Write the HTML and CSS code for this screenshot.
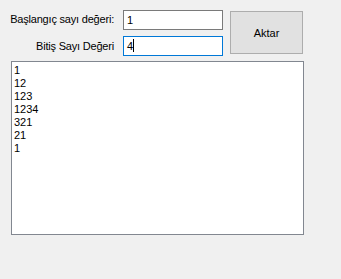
FILE: index.html
```
<!DOCTYPE html>
<html lang="tr">

<head>
    <meta charset="UTF-8">
    <meta name="viewport" content="width=device-width, initial-scale=1.0">
    <title>Form1</title>
    <link rel="stylesheet" href="styles.css">
</head>

<body>
    <div class="form">
        <div class="top">
            <div class="labels">
                <label class="lbl lbl-first">Başlangıç sayı değeri:</label>
                <label class="lbl lbl-second">Bitiş Sayı Değeri</label>
            </div>
            <div class="inputs">
                <div class="textbox">1</div>
                <div class="textbox focused">4<span class="caret"></span></div>
            </div>
            <button class="btn">Aktar</button>
        </div>
        <div class="listbox">
            <div>1</div>
            <div>12</div>
            <div>123</div>
            <div>1234</div>
            <div>321</div>
            <div>21</div>
            <div>1</div>
        </div>
    </div>
</body>

</html>
```

FILE: styles.css
```
body {
    margin: 0;
    padding: 0;
    background-color: #f0f0f0;
    font-family: 'Liberation Sans', Arial, sans-serif;
    font-size: 11px;
    color: #000;
}

.form {
    padding-top: 10px;
}

.top {
    display: flex;
    align-items: flex-start;
}

.labels {
    width: 114px;
    display: flex;
    flex-direction: column;
    align-items: flex-end;
}

.lbl {
    display: block;
    height: 20px;
    line-height: 18px;
    white-space: nowrap;
    letter-spacing: -0.2px;
}

.lbl-second {
    margin-top: 6px;
    line-height: 20px;
}

.inputs {
    margin-left: 9px;
    display: flex;
    flex-direction: column;
    gap: 6px;
}

.textbox {
    width: 100px;
    height: 20px;
    box-sizing: border-box;
    border: 1px solid #7a7a7a;
    background-color: #fff;
    padding-left: 3px;
    line-height: 18px;
}

.textbox.focused {
    border-color: #0078d7;
}

.caret {
    display: inline-block;
    width: 1px;
    height: 13px;
    background-color: #000;
    vertical-align: -2px;
}

.btn {
    margin-left: 7px;
    margin-top: 1px;
    width: 73px;
    height: 43px;
    box-sizing: border-box;
    border: 1px solid #adadad;
    background-color: #e1e1e1;
    font-family: 'Liberation Sans', Arial, sans-serif;
    font-size: 11px;
    color: #000;
    padding: 0;
}

.listbox {
    margin: 5px 0 0 11px;
    width: 293px;
    height: 174px;
    box-sizing: border-box;
    border: 1px solid #828790;
    background-color: #fff;
    padding: 2px 2px;
    line-height: 13px;
}
```
